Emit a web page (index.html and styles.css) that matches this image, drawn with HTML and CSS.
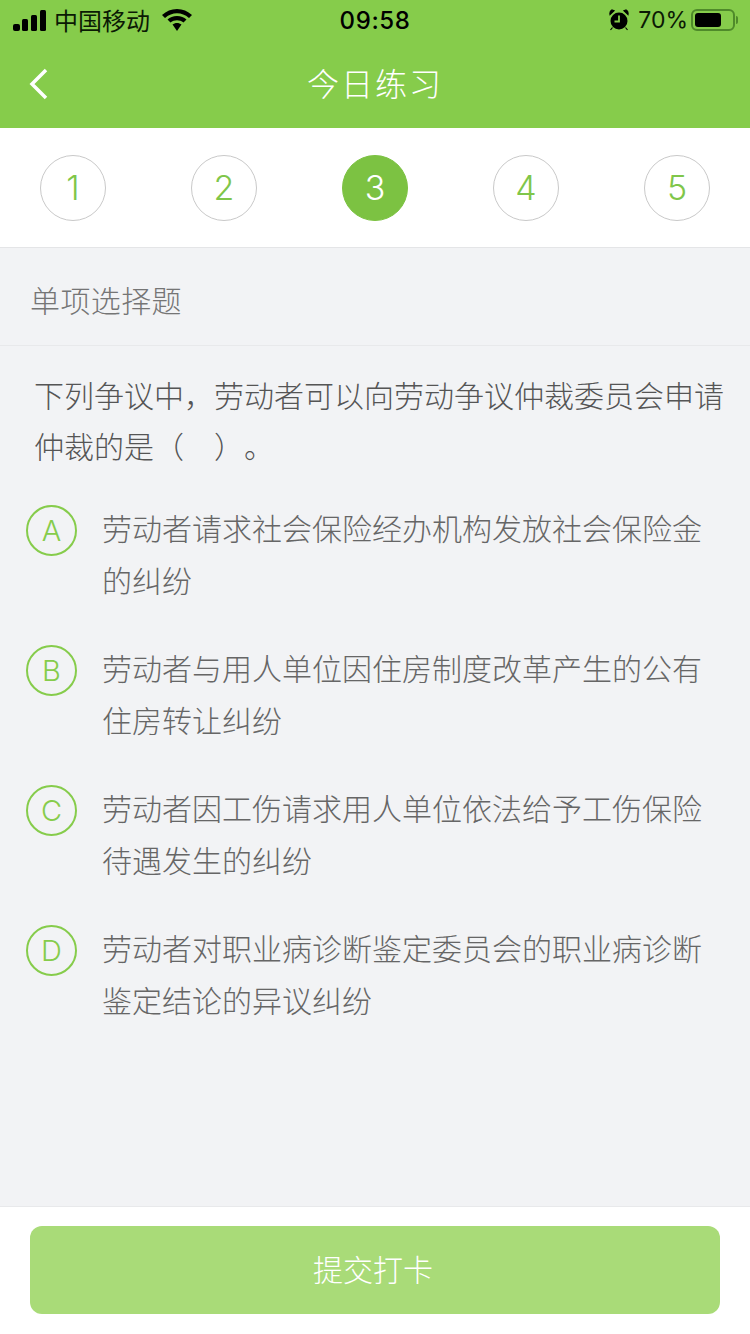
FILE: index.html
```html
<!DOCTYPE html>
<html lang="zh-CN">
<head>
<meta charset="utf-8">
<title>今日练习</title>
<link rel="stylesheet" href="styles.css">
</head>
<body>
<div class="page">
  <header class="head">
    <div class="status">
      <div class="status-left">
        <svg class="signal" width="34" height="21" viewBox="0 0 34 21"><rect x="0" y="14" width="7" height="7" rx="2"/><rect x="9" y="9" width="6" height="12" rx="1.500"/><rect x="18" y="5" width="6" height="16" rx="1.500"/><rect x="27" y="0" width="6" height="21" rx="1.500"/></svg>
        <span class="carrier">中国移动</span>
        <svg class="wifi" width="30" height="22" viewBox="0 0 30 22"><path d="M15 0C9 0 4.500 2 0 6L3 9C7 5.800 10.500 4.300 15 4.300S23 5.800 27 9L30 6C25.500 2 21 0 15 0Z"/><path d="M15 7C11 7 8 8.300 5.500 10.600L8.500 13.600C10.500 12 12.500 11.200 15 11.200S19.500 12 21.500 13.600L24.500 10.600C22 8.300 19 7 15 7Z"/><path d="M15 14C13.200 14 11.800 14.500 10.500 15.600L15 22 19.500 15.600C18.200 14.500 16.800 14 15 14Z"/></svg>
      </div>
      <div class="clock">09:58</div>
      <div class="status-right">
        <svg class="alarm" width="20" height="22" viewBox="0 0 20 22"><circle cx="10" cy="12" r="8.500"/><path d="M1 5.500 5 1.800 2.800 1Q0.500 2 1 5.500ZM19 5.500 15 1.800 17.200 1Q19.500 2 19 5.500ZM3.500 18.500 1.500 21M16.500 18.500 18.500 21" stroke="#000" stroke-width="1.200"/><path d="M10 6.500V12.500H5.500" fill="none" stroke="#86cc4b" stroke-width="1.800"/></svg>
        <span class="percent">70%</span>
        <div class="battery"><div class="battery-fill"></div></div>
        <div class="battery-tip"></div>
      </div>
    </div>
    <div class="nav">
      <svg class="back" width="20" height="32" viewBox="0 0 20 32"><path d="M17 2 3 16 17 30" fill="none" stroke="#fff" stroke-width="3.500"/></svg>
      <h1 class="title">今日练习</h1>
    </div>
  </header>

  <nav class="steps">
    <div class="step">1</div>
    <div class="step">2</div>
    <div class="step step-on">3</div>
    <div class="step">4</div>
    <div class="step">5</div>
  </nav>

  <div class="kind">单项选择题</div>

  <main class="body">
    <p class="question">下列争议中，劳动者可以向劳动争议仲裁委员会申请仲裁的是（　）。</p>
    <div class="option"><div class="letter">A</div><p class="option-text">劳动者请求社会保险经办机构发放社会保险金的纠纷</p></div>
    <div class="option"><div class="letter">B</div><p class="option-text">劳动者与用人单位因住房制度改革产生的公有住房转让纠纷</p></div>
    <div class="option"><div class="letter">C</div><p class="option-text">劳动者因工伤请求用人单位依法给予工伤保险待遇发生的纠纷</p></div>
    <div class="option"><div class="letter">D</div><p class="option-text">劳动者对职业病诊断鉴定委员会的职业病诊断鉴定结论的异议纠纷</p></div>
  </main>

  <footer class="foot">
    <button class="submit">提交打卡</button>
  </footer>
</div>
</body>
</html>
```
FILE: styles.css
```css
* { box-sizing: border-box; }
html, body { margin: 0; padding: 0; }
body {
  width: 750px;
  height: 1334px;
  overflow: hidden;
  font-family: "Noto Sans CJK SC", "Liberation Sans", sans-serif;
  background: #f2f3f5;
}
.page { display: flex; flex-direction: column; height: 1334px; }
.head { height: 128px; background: #86cc4b; flex: none; }
.status {
  height: 40px;
  padding: 0 12px 0 13px;
  display: flex;
  align-items: center;
  position: relative;
  color: #0b1a04;
}
.status-left, .status-right { display: flex; align-items: center; }
.status-right { margin-left: auto; }
.signal { margin-right: 8px; fill: #000; }
.carrier { font-size: 24px; line-height: 40px; margin-right: 12px; margin-left: -1px; }
.wifi { fill: #000; }
.clock {
  position: absolute;
  left: 0;
  right: 0;
  top: 0;
  text-align: center;
  font: 500 24px/42px Inter, "Liberation Sans", sans-serif;
  letter-spacing: 0.6px;
  color: #000;
}
.alarm { margin-right: 9px; }
.percent { font: 400 23px/42px Inter, "Liberation Sans", sans-serif; margin-right: 3px; color: #0b1a04; }
.battery {
  width: 44px;
  height: 22px;
  border: 2px solid #4f8a2a;
  border-radius: 6px;
  padding: 2px;
}
.battery-fill { width: 26px; height: 14px; background: #000; border-radius: 3px; }
.battery-tip { width: 2px; height: 8px; background: #4f8a2a; margin-left: 1px; border-radius: 0 2px 2px 0; }
.nav { height: 88px; position: relative; display: flex; align-items: center; justify-content: center; }
.back { position: absolute; left: 29px; top: 28px; }
.title { margin: 0; font-size: 32px; font-weight: 300; color: #fff; letter-spacing: 2px; line-height: 84px; height: 88px; }
.steps {
  height: 120px;
  flex: none;
  background: #fff;
  border-bottom: 1px solid #e4e5e7;
  padding: 27px 40px 0;
  display: flex;
  justify-content: space-between;
  align-items: flex-start;
}
.step {
  width: 66px;
  height: 66px;
  border-radius: 50%;
  border: 1px solid #c9c9c9;
  color: #7fc64a;
  font: 300 34px/64px Inter, "Liberation Sans", sans-serif;
  text-align: center;
}
.step-on { background: #7cc242; border-color: #7cc242; color: #fff; }
.kind {
  height: 98px;
  flex: none;
  border-bottom: 1px solid #e8e9eb;
  padding-left: 30px;
  font-size: 30px;
  letter-spacing: 0.4px;
  line-height: 103px;
  font-weight: 300;
  color: #757575;
}
.body { flex: 1; padding: 23px 20px 0 26px; }
.question {
  margin: 0 0 28px;
  padding-left: 8px;
  font-size: 30px;
  line-height: 51px;
  font-weight: 300;
  color: #555;
  text-spacing-trim: space-all;
}
.option { display: flex; align-items: flex-start; margin-bottom: 34px; }
.letter {
  flex: none;
  width: 51px;
  height: 51px;
  margin-top: 6px;
  border-radius: 50%;
  border: 2px solid #86cc4b;
  color: #86cc4b;
  font: 300 29px/47px Inter, "Liberation Sans", sans-serif;
  text-align: center;
}
.option-text {
  margin: 2px 0 0 25px;
  width: 600px;
  font-size: 30px;
  line-height: 52px;
  font-weight: 300;
  color: #666;
}
.foot {
  height: 128px;
  flex: none;
  background: #fff;
  border-top: 1px solid #e8e9eb;
  padding: 19px 30px 0;
}
.submit {
  display: block;
  width: 690px;
  height: 88px;
  border: 0;
  border-radius: 12px;
  background: #a9db78;
  color: #fff;
  font-family: inherit;
  font-size: 30px;
  font-weight: 300;
  padding: 0 4px 4px 0;
}
```
